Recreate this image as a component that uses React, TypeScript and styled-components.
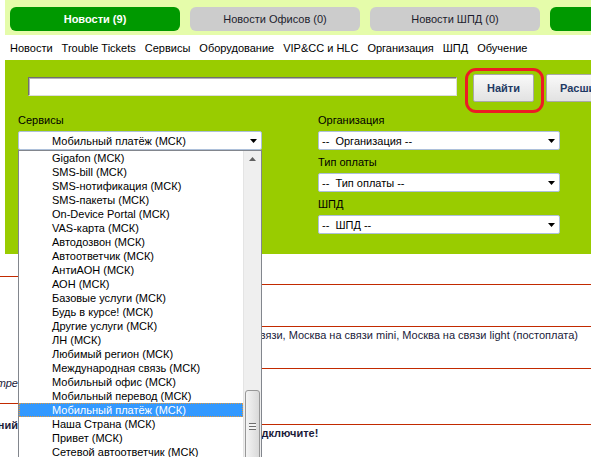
import React from "react"
import styled, { createGlobalStyle } from "styled-components"

const GlobalStyle = createGlobalStyle`
  html, body {
    margin: 0;
    padding: 0;
    background: #fff;
    overflow: hidden;
  }
  body {
    font-family: "Liberation Sans", Arial, sans-serif;
    font-size: 11px;
    color: #000;
  }
`

const Page = styled.div`
  width: 591px;
  height: 457px;
  overflow: hidden;
`

const TabBar = styled.div`
  display: flex;
  gap: 10px;
  height: 35px;
  margin-left: 5px;
  padding: 7px 0 0 5px;
  box-sizing: border-box;
  background: #e5fcaa;
  overflow: hidden;
`

const Tab = styled.div<{ $active?: boolean }>`
  flex: 0 0 170px;
  height: 24px;
  border-radius: 6px;
  display: flex;
  align-items: center;
  justify-content: center;
  background: ${({ $active }) => ($active ? "#009900" : "#cccccc")};
  color: ${({ $active }) => ($active ? "#fff" : "#1c1c2c")};
  font-weight: ${({ $active }) => ($active ? "bold" : "normal")};
`

const NavBar = styled.nav`
  display: flex;
  align-items: center;
  gap: 9px;
  height: 25px;
  padding-left: 10px;
`

const NavLink = styled.a`
  color: #000;
  text-decoration: none;
  white-space: nowrap;
`

const Panel = styled.div`
  margin-left: 5px;
  background: #99cc00;
  padding: 14px 0 20px 13px;
`

const SearchRow = styled.div`
  display: flex;
  align-items: flex-start;
  margin-left: 10px;
  height: 28px;
`

const SearchInput = styled.input`
  flex: 0 0 429px;
  height: 19px;
  margin: 3px 16px 0 0;
  padding: 0 3px;
  box-sizing: border-box;
  border: 1px solid;
  border-color: #707070 #dcdcdc #dcdcdc #707070;
  box-shadow: inset 1px 1px 0 #b4b4b4;
  background: #fff;
  outline: none;
`

const Highlight = styled.div`
  position: relative;
  flex-shrink: 0;
  margin-right: 12px;
`

const HighlightRing = styled.span`
  position: absolute;
  left: -8px;
  top: -6px;
  right: -10px;
  bottom: -11px;
  border: 3px solid #ec1c24;
  border-radius: 11px;
  pointer-events: none;
`

const ActionButton = styled.button`
  flex-shrink: 0;
  height: 28px;
  min-width: 60px;
  padding: 0 13px;
  font: bold 11px "Liberation Sans", Arial, sans-serif;
  color: #1f3a64;
  white-space: nowrap;
  background: linear-gradient(#f9f9f9, #e2e2e2);
  border: 1px solid #a9a9a9;
  border-radius: 2px;
`

const FormGrid = styled.div`
  display: grid;
  grid-template-columns: 244px 242px;
  column-gap: 56px;
  margin-top: 11px;
`

const Column = styled.div`
  display: flex;
  flex-direction: column;
  gap: 5px;
`

const Field = styled.div`
  position: relative;
  display: flex;
  flex-direction: column;
`

const Label = styled.div`
  line-height: 14px;
  margin-bottom: 4px;
`

const SelectBox = styled.div<{ $indent: number }>`
  height: 19px;
  box-sizing: border-box;
  display: flex;
  align-items: center;
  justify-content: space-between;
  padding: 0 4px 0 ${({ $indent }) => $indent}px;
  background: #fff;
  border: 1px solid #adc0da;
  border-radius: 2px;
  white-space: pre;
`

const Dropdown = styled.div`
  position: absolute;
  left: 0;
  top: 100%;
  z-index: 10;
  width: 244px;
  height: 330px;
  box-sizing: border-box;
  display: flex;
  background: #fff;
  border: 1px solid #82868d;
`

const OptionList = styled.ul`
  flex: 1;
  margin: 0;
  padding: 0;
  list-style: none;
  overflow: hidden;
`

const Option = styled.li<{ $selected?: boolean }>`
  height: 14px;
  line-height: 15px;
  padding-left: 33px;
  white-space: nowrap;
  background: ${({ $selected }) => ($selected ? "#3399ff" : "transparent")};
  color: ${({ $selected }) => ($selected ? "#fff" : "#000")};
  outline: ${({ $selected }) => ($selected ? "1px dotted #e49a3c" : "none")};
  outline-offset: -1px;
`

const ScrollTrack = styled.div`
  width: 17px;
  display: flex;
  flex-direction: column;
  align-items: center;
  background: #efefef;
  border-left: 1px solid #e4e4e4;
`

const ScrollArrow = styled.div`
  height: 17px;
  display: flex;
  align-items: center;
  justify-content: center;
`

const ScrollThumb = styled.div`
  margin-top: 224px;
  width: 15px;
  height: 100px;
  box-sizing: border-box;
  display: flex;
  justify-content: center;
  border: 1px solid #979797;
  border-radius: 3px;
  background: linear-gradient(90deg, #f4f4f4, #d9d9d9);
`

const Grip = styled.div`
  margin-top: 32px;
  width: 7px;
  height: 7px;
  background: repeating-linear-gradient(#6e6e6e 0 1px, #f4f4f4 1px 3px);
`

const News = styled.div`
  display: grid;
  grid-template-columns: 18px 1fr;
`

const NewsColumn = styled.div<{ $offset: number }>`
  margin-top: ${({ $offset }) => $offset}px;
  min-width: 0;
`

const NewsItem = styled.div<{ $height: number; $pad: number; $align?: "start" | "end" }>`
  height: ${({ $height }) => $height}px;
  box-sizing: border-box;
  padding-top: ${({ $pad }) => $pad}px;
  border-top: 1px solid #c22a00;
  display: flex;
  justify-content: ${({ $align }) => ($align === "end" ? "flex-end" : "flex-start")};
  line-height: 14px;
  white-space: nowrap;
`

const NewsText = styled.span<{ $italic?: boolean; $bold?: boolean; $inset?: number; $trail?: number }>`
  color: #1b1b3a;
  font-style: ${({ $italic }) => ($italic ? "italic" : "normal")};
  font-weight: ${({ $bold }) => ($bold ? "bold" : "normal")};
  padding-left: ${({ $inset }) => $inset ?? 0}px;
  padding-right: ${({ $trail }) => $trail ?? 0}px;
`

const Caret = () => (
  <svg width="7" height="4" viewBox="0 0 7 4">
    <path d="M0 0h7L3.5 4z" fill="#000" />
  </svg>
)

const UpCaret = () => (
  <svg width="7" height="4" viewBox="0 0 7 4">
    <path d="M3.5 0L7 4H0z" fill="#606060" />
  </svg>
)

const tabs = [
  { title: "Новости (9)", active: true },
  { title: "Новости Офисов (0)" },
  { title: "Новости ШПД (0)" },
  { title: "Обучение (0)", active: true },
]

const links = ["Новости", "Trouble Tickets", "Сервисы", "Оборудование", "VIP&CC и HLC", "Организация", "ШПД", "Обучение"]

const services = [
  "Gigafon (МСК)",
  "SMS-bill (МСК)",
  "SMS-нотификация (МСК)",
  "SMS-пакеты (МСК)",
  "On-Device Portal (МСК)",
  "VAS-карта (МСК)",
  "Автодозвон (МСК)",
  "Автоответчик (МСК)",
  "АнтиАОН (МСК)",
  "АОН (МСК)",
  "Базовые услуги (МСК)",
  "Будь в курсе! (МСК)",
  "Другие услуги (МСК)",
  "ЛН (МСК)",
  "Любимый регион (МСК)",
  "Международная связь (МСК)",
  "Мобильный офис (МСК)",
  "Мобильный перевод (МСК)",
  "Мобильный платёж (МСК)",
  "Наша Страна (МСК)",
  "Привет (МСК)",
  "Сетевой автоответчик (МСК)",
  "Супер Ноль (МСК)",
]

const selected = "Мобильный платёж (МСК)"

const filters = [
  { label: "Организация", value: "--  Организация --" },
  { label: "Тип оплаты", value: "--  Тип оплаты --" },
  { label: "ШПД", value: "--  ШПД --" },
]

export default function App() {
  return (
    <Page>
      <GlobalStyle />
      <TabBar>
        {tabs.map((t) => (
          <Tab key={t.title} $active={t.active}>
            {t.title}
          </Tab>
        ))}
      </TabBar>

      <NavBar>
        {links.map((l) => (
          <NavLink key={l} href="#">
            {l}
          </NavLink>
        ))}
      </NavBar>

      <Panel>
        <SearchRow>
          <SearchInput type="text" />
          <Highlight>
            <ActionButton>Найти</ActionButton>
            <HighlightRing />
          </Highlight>
          <ActionButton>Расширенный поиск</ActionButton>
        </SearchRow>

        <FormGrid>
          <Column>
            <Field>
              <Label>Сервисы</Label>
              <SelectBox $indent={33}>
                {selected}
                <Caret />
              </SelectBox>
              <Dropdown>
                <OptionList>
                  {services.map((s) => (
                    <Option key={s} $selected={s === selected}>
                      {s}
                    </Option>
                  ))}
                </OptionList>
                <ScrollTrack>
                  <ScrollArrow>
                    <UpCaret />
                  </ScrollArrow>
                  <ScrollThumb>
                    <Grip />
                  </ScrollThumb>
                </ScrollTrack>
              </Dropdown>
            </Field>
          </Column>
          <Column>
            {filters.map((f) => (
              <Field key={f.label}>
                <Label>{f.label}</Label>
                <SelectBox $indent={3}>
                  {f.value}
                  <Caret />
                </SelectBox>
              </Field>
            ))}
          </Column>
        </FormGrid>
      </Panel>

      <News>
        <NewsColumn $offset={22}>
          <NewsItem $height={127} $pad={99} $align="end">
            <NewsText $italic>Обучение в учебном центре</NewsText>
          </NewsItem>
          <NewsItem $height={60} $pad={14} $align="end">
            <NewsText $bold>Отключение уведомлений</NewsText>
          </NewsItem>
        </NewsColumn>
        <NewsColumn $offset={30}>
          <NewsItem $height={42} $pad={0} />
          <NewsItem $height={42} $pad={1} $align="end">
            <NewsText $trail={13}>Тарифы: Москва на связи, Москва на связи mini, Москва на связи light (постоплата)</NewsText>
          </NewsItem>
          <NewsItem $height={56} $pad={0} />
          <NewsItem $height={40} $pad={1}>
            <NewsText $bold $inset={229}>
              Подключите!
            </NewsText>
          </NewsItem>
        </NewsColumn>
      </News>
    </Page>
  )
}
